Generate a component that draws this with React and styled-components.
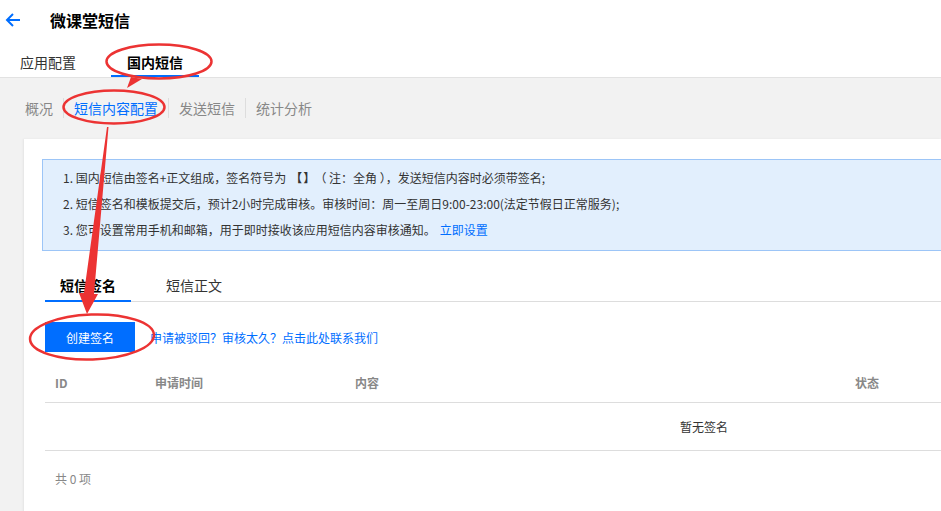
import React from "react";
import styled, { createGlobalStyle } from "styled-components";

const Global = createGlobalStyle`
  html, body { margin: 0; padding: 0; overflow: hidden; }
  body {
    background: #f2f2f2;
    font-family: "Noto Sans CJK SC", "Noto Sans", "Liberation Sans", sans-serif;
    color: #333;
  }
  * { box-sizing: border-box; }
`;

const Page = styled.div`
  position: relative;
  width: 941px;
  height: 511px;
  overflow: hidden;
`;

const Header = styled.header`
  background: #fff;
  border-bottom: 1px solid #e2e2e2;
`;

const TitleRow = styled.div`
  display: flex;
  align-items: center;
  height: 40px;
  padding-left: 5px;
`;

const BackButton = styled.span`
  display: flex;
  width: 16px;
  height: 16px;
  margin-right: 29px;
`;

const Title = styled.h1`
  margin: 0;
  font-size: 16px;
  font-weight: 600;
  color: #000;
  line-height: 20px;
`;

const TopTabs = styled.nav`
  display: flex;
  height: 37px;
  padding-left: 4px;
  gap: 19px;
`;

const TopTab = styled.span`
  padding: 12px 16px 3px;
  font-size: 14px;
  line-height: 20px;
  color: ${(p) => (p.$active ? "#000" : "#333")};
  font-weight: ${(p) => (p.$active ? 700 : 400)};
  border-bottom: 2px solid ${(p) => (p.$active ? "#006eff" : "transparent")};
`;

const SubNav = styled.nav`
  display: flex;
  align-items: center;
  height: 61px;
  padding: 0 0 2px 15px;
`;

const SubItem = styled.span`
  padding: 0 10px;
  font-size: 14px;
  line-height: 20px;
  color: ${(p) => (p.$active ? "#006eff" : "#888")};
  & + & { border-left: 1px solid #ddd; }
`;

const Card = styled.section`
  margin-left: 24px;
  background: #fff;
  box-shadow: -1px 0 2px rgba(0, 0, 0, 0.06);
  padding: 20px 0 40px 0;
  height: 400px;
`;

const Content = styled.div`
  width: 1340px;
  padding-left: 21px;
`;

const Notice = styled.div`
  margin-left: -3px;
  background: #e2effd;
  border: 1px solid #9cc5f7;
  padding: 5px 20px 7px;
  font-size: 12px;
  line-height: 26px;
  color: #333;
`;

const NoticeLine = styled.p`
  margin: 0;
  white-space: nowrap;
`;

const Bracket = styled.b`
  margin: 0 4px;
  letter-spacing: 1px;
`;

const Link = styled.a`
  color: #006eff;
  text-decoration: none;
  font-size: 12px;
  margin-left: ${(p) => p.$gap || "0"};
`;

const Tabs = styled.div`
  display: flex;
  margin-top: 20px;
  border-bottom: 1px solid #ddd;
  width: 1318px;
`;

const Tab = styled.span`
  padding: 4px 15px 5px;
  margin-right: 20px;
  font-size: 14px;
  line-height: 20px;
  color: ${(p) => (p.$active ? "#000" : "#333")};
  font-weight: ${(p) => (p.$active ? 700 : 400)};
  border-bottom: 2px solid ${(p) => (p.$active ? "#006eff" : "transparent")};
  margin-bottom: -1px;
`;

const Toolbar = styled.div`
  display: flex;
  align-items: center;
  gap: 15px;
  margin-top: 20px;
  margin-bottom: 10px;
`;

const PrimaryButton = styled.button`
  width: 90px;
  height: 30px;
  border: none;
  background: #006eff;
  color: #fff;
  font-family: inherit;
  font-size: 12px;
  padding: 0;
`;

const Table = styled.div`
  width: 1318px;
`;

const HeadRow = styled.div`
  display: grid;
  grid-template-columns: 100px 200px 500px 1fr;
  height: 41px;
  align-items: center;
  border-bottom: 1px solid #ddd;
`;

const HeadCell = styled.span`
  padding-left: 10px;
  font-size: 12px;
  font-weight: 700;
  color: #888;
`;

const EmptyRow = styled.div`
  height: 48px;
  display: flex;
  align-items: center;
  justify-content: center;
  border-bottom: 1px solid #ddd;
  font-size: 12px;
  color: #333;
`;

const Footer = styled.div`
  padding: 19px 10px 0;
  font-size: 12px;
  line-height: 18px;
  color: #888;
`;

const Overlay = styled.svg`
  position: absolute;
  left: 0;
  top: 0;
  pointer-events: none;
`;

const RED = "#ec3333";

export default function App() {
  return (
    <Page>
      <Global />
      <Header>
        <TitleRow>
          <BackButton>
            <svg width="16" height="16" viewBox="0 0 16 16" fill="none" stroke="#006eff" strokeWidth="2">
              <path d="M15 8H2M8 2L2 8l6 6" />
            </svg>
          </BackButton>
          <Title>微课堂短信</Title>
        </TitleRow>
        <TopTabs>
          <TopTab>应用配置</TopTab>
          <TopTab $active>国内短信</TopTab>
        </TopTabs>
      </Header>
      <SubNav>
        <SubItem>概况</SubItem>
        <SubItem $active>短信内容配置</SubItem>
        <SubItem>发送短信</SubItem>
        <SubItem>统计分析</SubItem>
      </SubNav>
      <Card>
        <Content>
          <Notice>
            <NoticeLine>1. 国内短信由签名+正文组成，签名符号为<Bracket>【】</Bracket>（ 注：全角 ），发送短信内容时必须带签名;</NoticeLine>
            <NoticeLine>2. 短信签名和模板提交后，预计2小时完成审核。审核时间：周一至周日9:00-23:00(法定节假日正常服务);</NoticeLine>
            <NoticeLine>
              3. 您可设置常用手机和邮箱，用于即时接收该应用短信内容审核通知。<Link $gap="4px">立即设置</Link>
            </NoticeLine>
          </Notice>
          <Tabs>
            <Tab $active>短信签名</Tab>
            <Tab>短信正文</Tab>
          </Tabs>
          <Toolbar>
            <PrimaryButton>创建签名</PrimaryButton>
            <Link>申请被驳回？审核太久？点击此处联系我们</Link>
          </Toolbar>
          <Table>
            <HeadRow>
              <HeadCell>ID</HeadCell>
              <HeadCell>申请时间</HeadCell>
              <HeadCell>内容</HeadCell>
              <HeadCell>状态</HeadCell>
            </HeadRow>
            <EmptyRow>暂无签名</EmptyRow>
          </Table>
          <Footer>共 0 项</Footer>
        </Content>
      </Card>
      <Overlay width="941" height="511" viewBox="0 0 941 511">
        <ellipse cx="159" cy="61.5" rx="52.5" ry="17" fill="none" stroke={RED} strokeWidth="2.5" />
        <polygon points="131,77 142,79 127,88" fill={RED} />
        <ellipse cx="114" cy="107" rx="50.5" ry="16.5" fill="none" stroke={RED} strokeWidth="2.5" />
        <polygon points="107,127 108.5,127 94,294 98,294 87,314 79,293 84,293" fill={RED} />
        <ellipse cx="92" cy="337" rx="62" ry="22.5" fill="none" stroke={RED} strokeWidth="2.5" transform="rotate(-2 92 337)" />
      </Overlay>
    </Page>
  );
}
